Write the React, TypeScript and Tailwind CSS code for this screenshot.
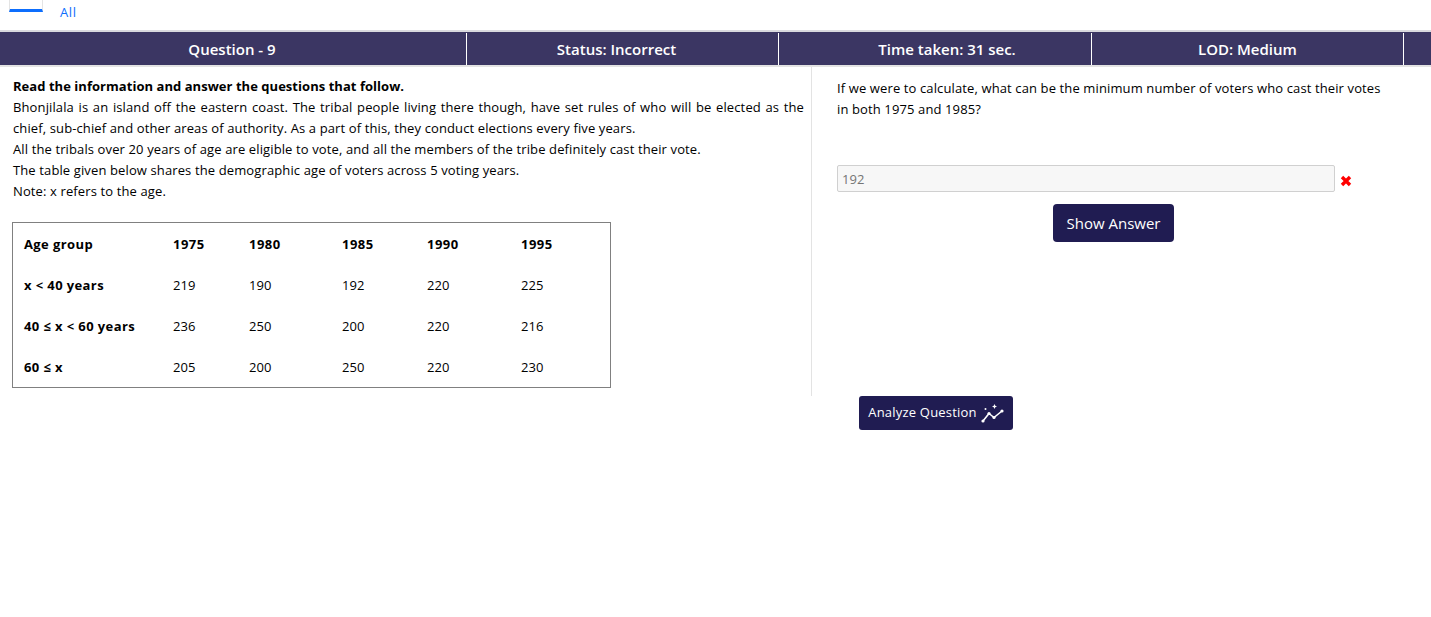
import { Fragment } from "react";

const headerCells = [
  { text: "Question - 9", cls: "w-[467px] pr-[2px]" },
  { text: "Status: Incorrect", cls: "w-[312px] pr-[12px]" },
  { text: "Time taken: 31 sec.", cls: "w-[313px] pl-[24px]" },
  { text: "LOD: Medium", cls: "w-[312px]" },
];

const tableRows = [
  { label: "x < 40 years", values: [219, 190, 192, 220, 225] },
  { label: "40 ≤ x < 60 years", values: [236, 250, 200, 220, 216] },
  { label: "60 ≤ x", values: [205, 200, 250, 220, 230] },
];

const years = [1975, 1980, 1985, 1990, 1995];

function AnalyzeIcon() {
  return (
    <svg width="23" height="19" viewBox="0 0 23 19" fill="none" className="ml-[4px]">
      <path d="M2 17 L8 9.5 L13 13.5 L21 7" stroke="white" strokeWidth="1.6" strokeLinecap="round" strokeLinejoin="round" />
      <circle cx="2" cy="17" r="1.6" fill="white" />
      <circle cx="8" cy="9.5" r="1.6" fill="white" />
      <circle cx="13" cy="13.5" r="1.6" fill="white" />
      <circle cx="21" cy="7" r="1.6" fill="white" />
      <path d="M13.5 0 L14.3 1.7 L16 2.5 L14.3 3.3 L13.5 5 L12.7 3.3 L11 2.5 L12.7 1.7 Z" fill="white" />
      <circle cx="4.5" cy="5" r="1" fill="white" />
    </svg>
  );
}

export default function App() {
  return (
    <div className="min-h-[617px] bg-white text-[13px] text-black font-['Open_Sans','Noto_Sans',sans-serif] tracking-[0.12px]">
      {/* top tabs */}
      <div className="h-[30px] flex pl-[9px]">
        <div className="w-[34px] h-[12px] border-x border-b-[3px] border-x-[#e4e4e4] border-b-[#0d6efd]" />
        <a className="ml-[17px] mt-[3px] text-[13px] tracking-[0.6px] leading-[18px] text-[#0d6efd]">All</a>
      </div>

      {/* question header */}
      <div className="flex h-[37px] pt-[1px] border-t-2 border-b-2 border-t-[#d9d9de] border-b-[#e3e3e3] bg-[#3b3663] text-white font-semibold text-[15px] tracking-[0px]">
        {headerCells.map((cell) => (
          <div key={cell.text} className={`flex items-center justify-center border-r border-white ${cell.cls}`}>
            {cell.text}
          </div>
        ))}
      </div>

      <div className="flex">
        {/* passage */}
        <div className="w-[812px] h-[329px] border-r border-[#e3e3e3] pl-[13px] pr-[7px] pt-[9px]">
          <div className="leading-[21px]">
            <p className="font-bold tracking-[0.04px]">Read the information and answer the questions that follow.</p>
            <p className="text-justify">
              Bhonjilala is an island off the eastern coast. The tribal people living there though, have set rules of who will be elected as the chief, sub-chief and other areas of authority. As a part of this, they conduct elections every five years.
            </p>
            <p>All the tribals over 20 years of age are eligible to vote, and all the members of the tribe definitely cast their vote.</p>
            <p>The table given below shares the demographic age of voters across 5 voting years.</p>
            <p>Note: x refers to the age.</p>
          </div>

          <div className="mt-[20px] ml-[-1px] w-[599px] h-[166px] border border-[#808080] grid grid-cols-[149px_76px_93px_85px_94px_1fr] auto-rows-[41px] pl-[11px] pt-[1px]">
            <div className="font-bold tracking-[0.4px] flex items-center">Age group</div>
            {years.map((y) => (
              <div key={y} className="font-bold tracking-[0.5px] flex items-center">{y}</div>
            ))}
            {tableRows.map((row) => (
              <Fragment key={row.label}>
                <div className="font-bold tracking-[0.4px] flex items-center">{row.label}</div>
                {row.values.map((v, i) => (
                  <div key={i} className="flex items-center">{v}</div>
                ))}
              </Fragment>
            ))}
          </div>
        </div>

        {/* answer */}
        <div className="w-[619px] pl-[25px] pt-[11px]">
          <p className="w-[550px] leading-[21px]">
            If we were to calculate, what can be the minimum number of voters who cast their votes in both 1975 and 1985?
          </p>
          <div className="mt-[45px] flex items-center">
            <div className="w-[498px] h-[27px] border border-[#d0d0d0] rounded-[2px] bg-[#f7f7f7] text-[#757575] pl-[4px] pt-[2px] flex items-center">192</div>
            <svg width="14" height="14" viewBox="0 0 14 14" className="ml-[4px] mt-[5px]">
              <path d="M3 3 L11 11 M11 3 L3 11" stroke="#ff0000" strokeWidth="3.4" />
            </svg>
          </div>
          <button className="block ml-[216px] mt-[12px] w-[121px] h-[38px] rounded-[4px] bg-[#201c52] text-white text-[15px] tracking-[0px] font-normal">
            Show Answer
          </button>
        </div>
      </div>

      <button className="ml-[859px] flex items-center justify-center w-[154px] h-[34px] rounded-[3px] bg-[#201c52] text-white text-[13px] tracking-[0.2px]">
        Analyze Question
        <AnalyzeIcon />
      </button>
    </div>
  );
}
